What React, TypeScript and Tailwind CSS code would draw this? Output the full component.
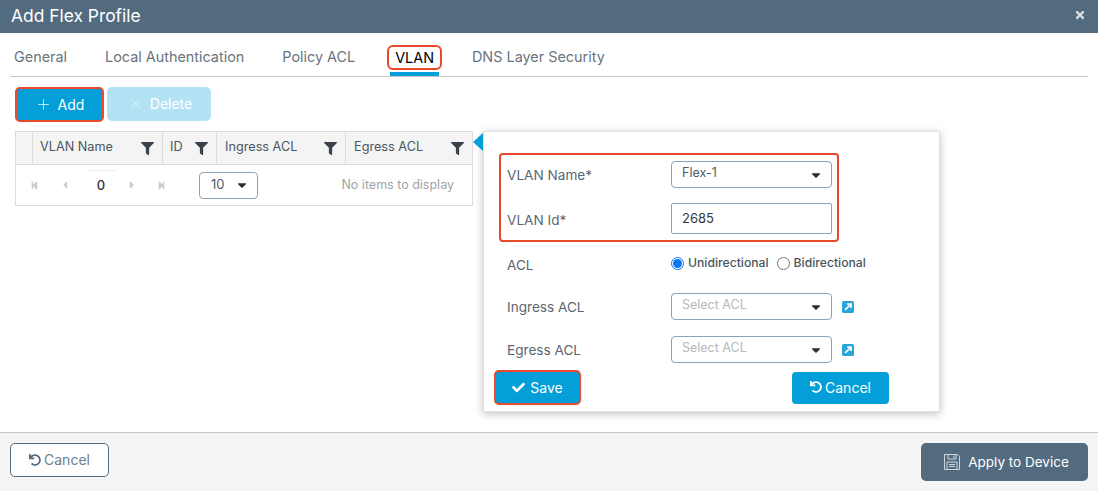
import { Plus, X } from "lucide-react";
import { FaCheck, FaFilter, FaStepBackward, FaStepForward, FaCaretLeft, FaCaretRight, FaCaretDown, FaUndo, FaTimes } from "react-icons/fa";

const tabs = ["General", "Local Authentication", "Policy ACL"];

function Funnel() {
  return <FaFilter className="text-[#39424a] text-[13px]" />;
}

function Caret() {
  return <FaCaretDown className="text-[#2b2f33] text-[14px]" />;
}

function Select({ value, placeholder }: { value: string; placeholder?: boolean }) {
  return (
    <div className="w-[161px] h-[27px] border border-[#8ba3b5] rounded-[4px] bg-white flex items-center justify-between pl-[10px] pr-[8px]">
      <span className={`text-[12.5px] -mt-[3px] ${placeholder ? "text-[#b5b8bb]" : "text-[#4f5b66]"}`}>{value}</span>
      <Caret />
    </div>
  );
}

function LinkIcon() {
  return (
    <svg width="12" height="12" viewBox="0 0 12 12" className="ml-[10px]">
      <rect width="12" height="12" rx="1.5" fill="#2ba5d8" />
      <path d="M3.2 8.8 8 4M5 3h4v4" stroke="#fff" strokeWidth="1.7" fill="none" />
    </svg>
  );
}

function Radio({ on }: { on?: boolean }) {
  return (
    <span className={`w-[13px] h-[13px] rounded-full border flex items-center justify-center bg-white ${on ? "border-[#0b76ef]" : "border-[#767676]"}`}>
      {on && <span className="w-[9px] h-[9px] rounded-full bg-[#0b76ef]" />}
    </span>
  );
}

function HeadCell({ label, className }: { label: string; className: string }) {
  return (
    <div className={`flex items-center justify-between h-full border-l border-[#dcdcdc] pr-[8px] ${className}`}>
      <span className="text-[12.7px] text-[#4b5660] pb-[2px]">{label}</span>
      <Funnel />
    </div>
  );
}

function FormRow({ label, labelClass, children }: { label: string; labelClass?: string; children: React.ReactNode }) {
  return (
    <div className="flex items-center">
      <span className={`w-[164px] text-[13.6px] text-[#5b6670] ${labelClass ?? ""}`}>{label}</span>
      {children}
    </div>
  );
}

export default function App() {
  return (
    <div className="w-[1098px] h-[491px] bg-white flex flex-col overflow-hidden font-['Inter','Liberation_Sans',sans-serif]">
      {/* header */}
      <div className="h-[33px] bg-[#526b7f] flex items-center justify-between pl-[11px] pr-[12px] shrink-0">
        <span className="text-white text-[17.4px] -mt-[1px]">Add Flex Profile</span>
        <FaTimes className="text-[#dfe4e8] text-[12px] -mt-[4px]" />
      </div>

      {/* tabs */}
      <div className="h-[44px] mx-[10px] border-b border-[#c8c8c8] flex items-end shrink-0 pl-[4px] text-[14.4px] text-[#6a747d]">
        {tabs.map((t) => (
          <span key={t} className="mr-[38px] pb-[8px]">{t}</span>
        ))}
        <div className="relative mr-[30px] h-full flex items-end justify-center">
          <span className="mb-[6px] -ml-[6px] border-2 border-[#e8492a] rounded-[6px] px-[6px] h-[25px] flex items-center text-black">VLAN</span>
          <span className="absolute left-[-3px] right-[3px] bottom-0 h-[4px] bg-[#049fd9]" />
        </div>
        <span className="pb-[8px]">DNS Layer Security</span>
      </div>

      {/* toolbar */}
      <div className="flex gap-[3px] ml-[15px] mt-[10px] shrink-0">
        <button className="w-[89px] h-[35px] bg-[#049fd9] border-2 border-[#e8492a] rounded-[5px] text-white text-[14px] flex items-center justify-center gap-[6px] pb-[1px]">
          <Plus size={17} strokeWidth={1} />
          Add
        </button>
        <button className="w-[104px] h-[34px] bg-[#b3e2f4] rounded-[5px] text-white text-[14px] flex items-center justify-center gap-[7px] pb-[1px] pl-[2px]">
          <X size={15} strokeWidth={1} />
          Delete
        </button>
      </div>

      {/* body */}
      <div className="flex flex-1 ml-[15px] mt-[9px] min-h-0">
        <div className="w-[458px] h-[75px] border border-[#dcdcdc]">
          <div className="h-[33px] bg-[#f4f4f4] border-b border-[#dcdcdc] flex items-center">
            <div className="w-[16px]" />
            <HeadCell label="VLAN Name" className="w-[130px] pl-[7px]" />
            <HeadCell label="ID" className="w-[54px] pl-[7px]" />
            <HeadCell label="Ingress ACL" className="w-[129px] pl-[8px]" />
            <HeadCell label="Egress ACL" className="flex-1 pl-[8px]" />
          </div>
          <div className="h-[40px] flex items-center text-[#c9cbcd] text-[12px] pl-[14px] pr-[18px]">
            <FaStepBackward className="text-[9px]" />
            <FaCaretLeft className="ml-[20px]" />
            <span className="ml-[15px] w-[30px] h-[30px] border-t border-[#eeeeee] flex items-center justify-center text-[13px] font-medium text-[#333]">0</span>
            <FaCaretRight className="ml-[10px]" />
            <FaStepForward className="ml-[19px] text-[9px]" />
            <div className="ml-[33px] w-[59px] h-[27px] border border-[#8ba3b5] rounded-[4px] flex items-center justify-between pl-[11px] pr-[8px]">
              <span className="text-[13px] text-[#4f5b66]">10</span>
              <Caret />
            </div>
            <span className="ml-auto text-[12.5px] text-[#a0a4a8]">No items to display</span>
          </div>
        </div>

        {/* form popover */}
        <div className="relative ml-[10px] w-[457px] h-[281px] bg-white border border-[#e2e2e2] shadow-[0_2px_8px_rgba(0,0,0,0.25)] pl-[15px] pt-[21px]">
          <span className="absolute -left-[11px] top-[1px] w-0 h-0 border-y-[9px] border-y-transparent border-r-[10px] border-r-[#049fd9]" />
          <div className="w-[340px] h-[89px] border-2 border-[#e8492a] rounded-[4px] pl-[6px] pt-[6px]">
            <FormRow label="VLAN Name*" labelClass="pt-[1px]">
              <Select value="Flex-1" />
            </FormRow>
            <div className="mt-[15px]">
              <FormRow label="VLAN Id*" labelClass="pt-[3px]">
                <div className="w-[161px] h-[31px] border border-[#8ba3b5] rounded-[2px] flex items-center pl-[10px] text-[13px] text-[#2f363d]">2685</div>
              </FormRow>
            </div>
          </div>
          <div className="ml-[8px]">
            <div className="mt-[10px] h-[27px] flex">
              <span className="w-[164px] text-[13.6px] text-[#5b6670] pt-[3px]">ACL</span>
              <div className="flex items-center h-[22px] text-[12.2px] font-medium text-[#4b5660]">
                <Radio on />
                <span className="ml-[4px]">Unidirectional</span>
                <span className="ml-[8px]"><Radio /></span>
                <span className="ml-[4px]">Bidirectional</span>
              </div>
            </div>
            <div className="mt-[14px]">
              <FormRow label="Ingress ACL" labelClass="pt-[2px]">
                <Select value="Select ACL" placeholder />
                <LinkIcon />
              </FormRow>
            </div>
            <div className="mt-[16px]">
              <FormRow label="Egress ACL" labelClass="pt-[2px]">
                <Select value="Select ACL" placeholder />
                <LinkIcon />
              </FormRow>
            </div>
          </div>
          <div className="flex items-center mt-[7px] -ml-[5px]">
            <button className="w-[87px] h-[35px] bg-[#049fd9] border-2 border-[#e8492a] rounded-[5px] text-white text-[14px] flex items-center justify-center gap-[5px] pb-[1px]">
              <FaCheck className="text-[13px]" />
              Save
            </button>
            <button className="ml-[211px] w-[97px] h-[32px] bg-[#049fd9] rounded-[4px] text-white text-[14px] flex items-center justify-center gap-[3px] pb-[1px]">
              <FaUndo className="text-[12px]" />
              Cancel
            </button>
          </div>
        </div>
      </div>

      {/* footer */}
      <div className="h-[59px] shrink-0 bg-[#f5f5f5] border-t border-[#c8c8c8] flex items-start justify-between pl-[10px] pr-[10px] pt-[10px]">
        <button className="w-[99px] h-[34px] border border-[#526b7f] rounded-[5px] bg-white text-[14px] text-[#6b7f90] flex items-center justify-center gap-[3px] pb-[1px]">
          <FaUndo className="text-[12px] text-[#526b7f]" />
          Cancel
        </button>
        <button className="w-[167px] h-[38px] bg-[#526b7f] rounded-[5px] text-white text-[13.5px] flex items-center justify-center gap-[7px] pl-[3px]">
          <svg width="18" height="18" viewBox="0 0 18 18" fill="none" stroke="#cfd6dc" strokeWidth="1">
            <path d="M1.5 1.5h13l2 2v13h-15z" />
            <path d="M5 1.5v4.5h8V1.5M11 2.5v2.5" />
            <path d="M4 9h10v7.5H4zM6 11.5h6M6 13.5h6" />
          </svg>
          Apply to Device
        </button>
      </div>
    </div>
  );
}
